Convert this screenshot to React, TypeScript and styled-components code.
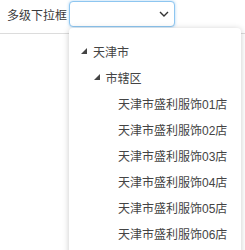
import React from "react";
import styled, { createGlobalStyle } from "styled-components";

const Global = createGlobalStyle`
  html, body { margin: 0; padding: 0; background: #fff; }
  body { font-family: "Liberation Sans", "Noto Sans CJK SC", sans-serif; font-size: 12px; color: #333; }
`;

const Page = styled.div`
  position: relative;
  width: 245px;
  height: 250px;
  overflow: hidden;
`;

const Toolbar = styled.div`
  display: flex;
  align-items: flex-start;
  height: 34px;
  padding: 1px 0 0 7px;
  box-sizing: border-box;
  border-bottom: 1px solid #dcdcdc;
`;

const Label = styled.span`
  width: 62px;
  line-height: 26px;
  margin-top: 2px;
  color: #3a3a3a;
  white-space: nowrap;
`;

const SelectWrap = styled.div`
  position: relative;
`;

const Select = styled.div`
  width: 106px;
  height: 26px;
  box-sizing: border-box;
  border: 1px solid #8ec6f0;
  border-radius: 4px;
  box-shadow: 0 0 3px rgba(82, 168, 236, 0.5);
  display: flex;
  align-items: center;
  justify-content: flex-end;
  padding-right: 4px;
  background: #fff;
`;

const Panel = styled.div`
  position: absolute;
  top: 27px;
  left: 0;
  width: 172px;
  height: 240px;
  background: #fff;
  border-radius: 4px;
  box-shadow: 0 1px 6px rgba(0, 0, 0, 0.22);
  padding-top: 10px;
  box-sizing: border-box;
  z-index: 2;
`;

const Row = styled.div<{ $level: number }>`
  display: flex;
  align-items: center;
  height: 26px;
  padding-left: ${(p) => 12 + p.$level * 12.5}px;
  white-space: nowrap;
  color: #444;
`;

const Toggle = styled.span`
  width: 12px;
  display: inline-flex;
  align-items: center;
`;

const Caret = () => (
  <svg width="6" height="6" viewBox="0 0 6 6">
    <polygon points="6,0 6,6 0,6" fill="#444" />
  </svg>
);

const Chevron = () => (
  <svg width="12" height="8" viewBox="0 0 12 8">
    <polyline points="2,2 6,6 10,2" fill="none" stroke="#333" strokeWidth="1.4" />
  </svg>
);

const items = [
  { level: 0, text: "天津市", open: true },
  { level: 1, text: "市辖区", open: true },
  ...[1, 2, 3, 4, 5, 6].map((n) => ({ level: 2, text: `天津市盛利服饰0${n}店`, open: false })),
];

export default function App() {
  return (
    <>
      <Global />
      <Page>
        <Toolbar>
          <Label>多级下拉框</Label>
          <SelectWrap>
            <Select>
              <Chevron />
            </Select>
            <Panel>
              {items.map((it, i) => (
                <Row key={i} $level={it.level}>
                  <Toggle>{it.open ? <Caret /> : null}</Toggle>
                  {it.text}
                </Row>
              ))}
            </Panel>
          </SelectWrap>
        </Toolbar>
      </Page>
    </>
  );
}
